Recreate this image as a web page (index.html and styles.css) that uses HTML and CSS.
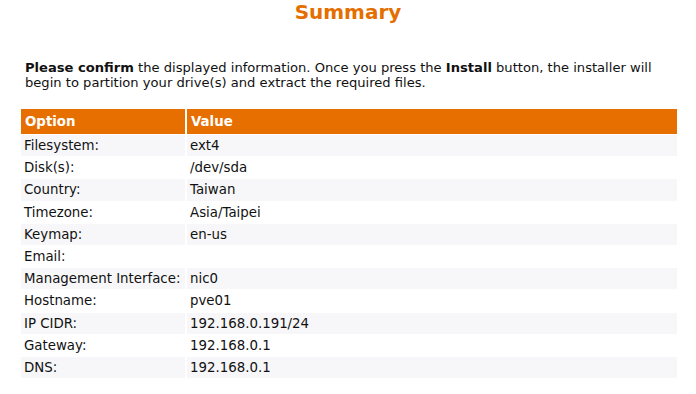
FILE: index.html
```html
<!DOCTYPE html>
<html>
<head>
<meta charset="utf-8">
<link rel="stylesheet" href="styles.css">
</head>
<body>
<h1 class="title">Summary</h1>
<p class="intro"><b>Please confirm</b> the displayed information. Once you press the <b>Install</b> button, the installer will begin to partition your drive(s) and extract the required files.</p>
<table class="summary">
<thead>
<tr><th class="c1">Option</th><th>Value</th></tr>
</thead>
<tbody>
<tr><td>Filesystem:</td><td>ext4</td></tr>
<tr><td>Disk(s):</td><td>/dev/sda</td></tr>
<tr><td>Country:</td><td>Taiwan</td></tr>
<tr><td>Timezone:</td><td>Asia/Taipei</td></tr>
<tr><td>Keymap:</td><td>en-us</td></tr>
<tr><td>Email:</td><td></td></tr>
<tr><td>Management Interface:</td><td>nic0</td></tr>
<tr><td>Hostname:</td><td>pve01</td></tr>
<tr><td>IP CIDR:</td><td>192.168.0.191/24</td></tr>
<tr><td>Gateway:</td><td>192.168.0.1</td></tr>
<tr><td>DNS:</td><td>192.168.0.1</td></tr>
</tbody>
</table>
</body>
</html>
```
FILE: styles.css
```css
html, body {
  margin: 0;
  padding: 0;
  background: #ffffff;
}
body {
  font-family: "DejaVu Sans", sans-serif;
  font-size: 13px;
  color: #111111;
}
.title {
  margin: 0;
  padding-top: 0;
  text-align: center;
  font-size: 20px;
  line-height: 24px;
  font-weight: bold;
  color: #e46f00;
}
.intro {
  margin: 36px 30px 0 25px;
  font-size: 13.1px;
  line-height: 15px;
}
.summary {
  margin: 18px 0 0 19px;
  width: 660px;
  border-collapse: separate;
  border-spacing: 2px 1px;
  font-size: 13.35px;
  line-height: 15px;
}
.summary th {
  background: #e66f00;
  color: #ffffff;
  text-align: left;
  font-weight: bold;
  height: 25px;
  padding: 0 4px;
  box-sizing: border-box;
}
.summary th.c1 {
  width: 164px;
}
.summary td {
  height: 21.2px;
  padding: 0 0 0 3px;
  box-sizing: border-box;
}
.summary tbody tr:nth-child(odd) td {
  background: #f7f7f9;
}
```
